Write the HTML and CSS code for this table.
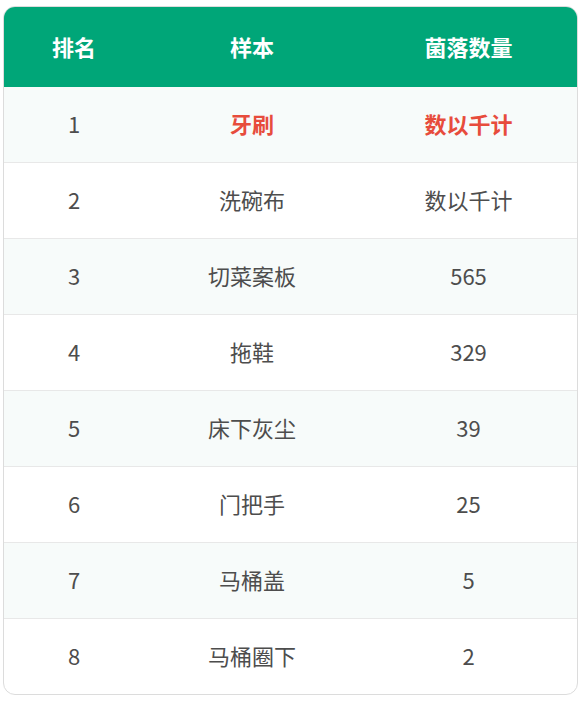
FILE: index.html
```html
<!DOCTYPE html>
<html lang="zh">
<head>
<meta charset="utf-8">
<link rel="stylesheet" href="styles.css">
</head>
<body>
<div class="card">
<table class="rank">
<thead>
<tr><th class="c1">排名</th><th class="c2">样本</th><th class="c3">菌落数量</th></tr>
</thead>
<tbody>
<tr class="top"><td>1</td><td class="hl">牙刷</td><td class="hl">数以千计</td></tr>
<tr><td>2</td><td>洗碗布</td><td>数以千计</td></tr>
<tr><td>3</td><td>切菜案板</td><td>565</td></tr>
<tr><td>4</td><td>拖鞋</td><td>329</td></tr>
<tr><td>5</td><td>床下灰尘</td><td>39</td></tr>
<tr><td>6</td><td>门把手</td><td>25</td></tr>
<tr><td>7</td><td>马桶盖</td><td>5</td></tr>
<tr><td>8</td><td>马桶圈下</td><td>2</td></tr>
</tbody>
</table>
</div>
</body>
</html>
```
FILE: styles.css
```css
html, body { margin: 0; padding: 0; background: #fff; }
body { font-family: "Microsoft YaHei", "Noto Sans CJK SC", "Noto Sans", sans-serif; }
.card {
  margin: 6px 4px 0 3px;
  border: 1px solid #dcdcdc;
  border-radius: 12px;
  overflow: hidden;
}
.rank { width: 100%; border-collapse: collapse; table-layout: fixed; }
.rank th, .rank td { text-align: center; padding: 0 0 3px; font-size: 22px; }
.rank th { background: #00a678; color: #fff; font-weight: 700; height: 77px; }
.c1 { width: 140px; }
.c2 { width: 216px; }
.rank td { height: 72px; color: #4d4d4d; border-top: 1px solid #e8e8e8; }
.rank tbody tr:first-child td { border-top: none; height: 72px; }
.rank tbody tr:nth-child(odd) td { background: #f7fbfa; }
.rank td.hl { color: #e74c3c; font-weight: 700; }
```
